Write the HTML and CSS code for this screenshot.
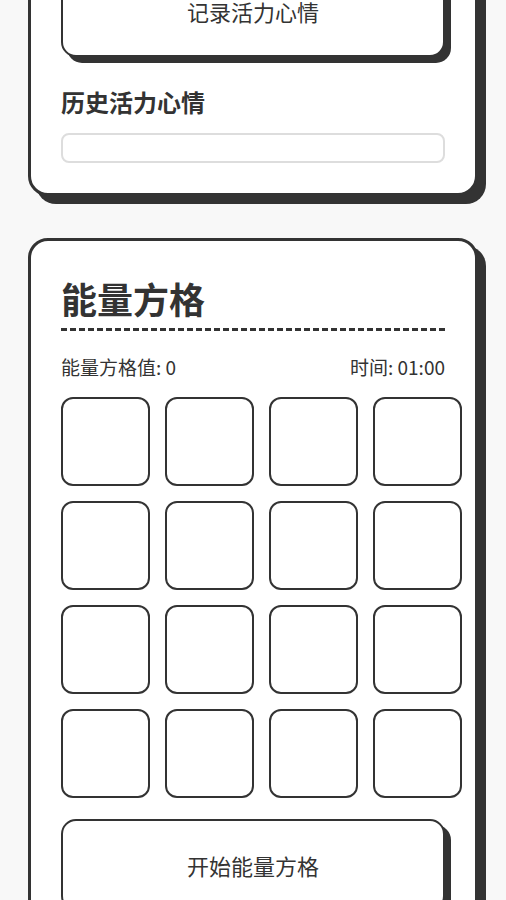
FILE: index.html
```html
<!DOCTYPE html>
<html lang="zh">
<head>
<meta charset="utf-8">
<title>能量方格</title>
<link rel="stylesheet" href="styles.css">
</head>
<body>
<main class="page">
  <section class="card card-mood">
    <button class="btn">记录活力心情</button>
    <h3 class="sub-title">历史活力心情</h3>
    <div class="history-box"></div>
  </section>

  <section class="card card-grid">
    <h2 class="title">能量方格</h2>
    <div class="stats">
      <span>能量方格值: 0</span>
      <span>时间: 01:00</span>
    </div>
    <div class="grid">
      <div class="tile"></div><div class="tile"></div><div class="tile"></div><div class="tile"></div>
      <div class="tile"></div><div class="tile"></div><div class="tile"></div><div class="tile"></div>
      <div class="tile"></div><div class="tile"></div><div class="tile"></div><div class="tile"></div>
      <div class="tile"></div><div class="tile"></div><div class="tile"></div><div class="tile"></div>
    </div>
    <button class="btn">开始能量方格</button>
  </section>
</main>
</body>
</html>
```
FILE: styles.css
```css
* { box-sizing: border-box; }
html, body {
  margin: 0;
  padding: 0;
  background: #f8f8f8;
  color: #333;
  font-family: "Noto Sans CJK SC", "Noto Sans", sans-serif;
}
.page {
  padding: 0 28px 40px;
}
.card {
  background: #fff;
  border: 3px solid #333;
  border-radius: 20px;
  box-shadow: 8px 8px 0 #333;
  padding: 30px;
}
.card-mood {
  margin-top: -68px;
  padding-bottom: 30px;
}
.card-grid {
  margin-top: 42px;
}
.btn {
  display: block;
  width: 100%;
  height: 92px;
  background: #fff;
  border: 2px solid #333;
  border-radius: 15px;
  box-shadow: 6px 6px 0 #333;
  font-family: inherit;
  font-size: 22px;
  color: #333;
  padding: 0;
}
.sub-title {
  margin: 27px 0 13px;
  font-size: 24px;
  line-height: 36px;
  font-weight: 700;
}
.history-box {
  height: 30px;
  border: 2px solid #ddd;
  border-radius: 8px;
}
.title {
  margin: 0;
  font-size: 36px;
  line-height: 54px;
  font-weight: 700;
  padding-bottom: 3px;
  border-bottom: 3px dashed #333;
}
.stats {
  display: flex;
  justify-content: space-between;
  margin-top: 22px;
  font-size: 19px;
  line-height: 28px;
}
.grid {
  display: grid;
  grid-template-columns: repeat(4, 89px);
  grid-auto-rows: 89px;
  gap: 15px;
  margin: 16px 0 21px;
}
.tile {
  background: #fff;
  border: 2px solid #333;
  border-radius: 12px;
}
```
